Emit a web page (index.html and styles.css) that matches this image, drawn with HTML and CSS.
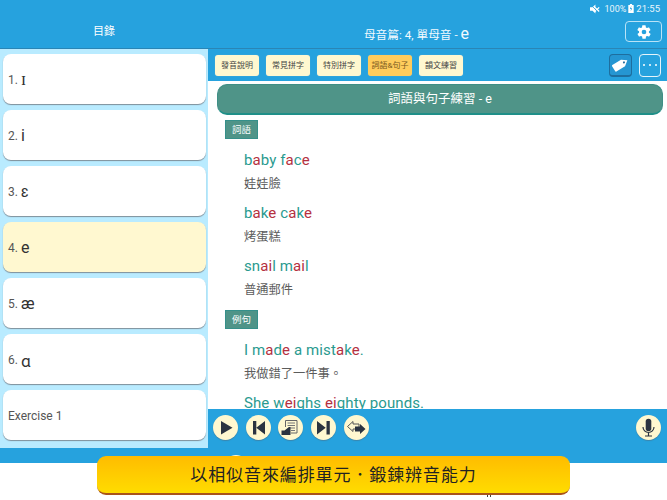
FILE: index.html
```html
<!DOCTYPE html>
<html lang="zh-Hant">
<head>
<meta charset="utf-8">
<title>母音篇</title>
<link rel="stylesheet" href="styles.css">
</head>
<body>
<div class="app">
  <header class="header">
    <div class="header-side"><span class="header-list-title">目錄</span></div>
    <div class="header-main">
      <div class="status">
        <svg class="mute" viewBox="0 0 12 12" width="10" height="10"><path d="M0 4h3l3.500-3.500v11L3 8H0z" fill="#fff"/><path d="M6 4l5 5M11 4L6 9" stroke="#fff" stroke-width="1.500"/><path d="M0 0l11 11" stroke="#26a2de" stroke-width="1"/></svg>
        <span class="pct">100%</span>
        <svg viewBox="0 0 6 10" width="6" height="9"><path d="M0 1h1.800V0h2.400v1H6v9H0z" fill="#fff"/><path d="M3.400 2L1.800 5.600h1.200L2.600 8.400l1.700-3.600H3z" fill="#26a2de"/></svg>
        <span>21:55</span>
      </div>
      <div class="title-row">
        <div class="title">母音篇: 4, 單母音 - <span class="title-ipa">e</span></div>
        <button class="gear-btn">
          <svg viewBox="0 0 24 24" width="16" height="16"><path fill="#fff" d="M19.400 13a7.500 7.500 0 0 0 0-2l2.100-1.600a.5.5 0 0 0 .1-.6l-2-3.500a.5.5 0 0 0-.6-.2l-2.500 1a7.300 7.300 0 0 0-1.700-1l-.4-2.700a.5.5 0 0 0-.5-.4h-4a.5.5 0 0 0-.5.4l-.4 2.700a7.300 7.300 0 0 0-1.700 1l-2.500-1a.5.5 0 0 0-.6.2l-2 3.500a.5.5 0 0 0 .1.600L4.600 11a7.500 7.500 0 0 0 0 2l-2.100 1.600a.5.5 0 0 0-.1.600l2 3.500c.1.200.4.300.6.200l2.500-1a7.300 7.300 0 0 0 1.700 1l.4 2.700c0 .2.200.4.500.4h4c.3 0 .5-.2.500-.4l.4-2.700a7.300 7.300 0 0 0 1.700-1l2.500 1c.2.100.5 0 .6-.2l2-3.500a.5.500 0 0 0-.1-.6zM12 15.500a3.500 3.500 0 1 1 0-7 3.500 3.500 0 0 1 0 7z"/></svg>
        </button>
      </div>
    </div>
  </header>
  <div class="body">
    <aside class="sidebar">
      <div class="item"><span class="num">1.</span> <span class="ipa ipa-serif">ɪ</span></div>
      <div class="item"><span class="num">2.</span> <span class="ipa">i</span></div>
      <div class="item"><span class="num">3.</span> <span class="ipa">ɛ</span></div>
      <div class="item item-active"><span class="num">4.</span> <span class="ipa">e</span></div>
      <div class="item"><span class="num">5.</span> <span class="ipa">æ</span></div>
      <div class="item"><span class="num">6.</span> <span class="ipa">ɑ</span></div>
      <div class="item"><span class="num">Exercise 1</span></div>
    </aside>
    <main class="pane">
      <nav class="toolbar">
        <button class="tab">發音說明</button>
        <button class="tab">常見拼字</button>
        <button class="tab">特別拼字</button>
        <button class="tab tab-active">詞語&amp;句子</button>
        <button class="tab">韻文練習</button>
        <button class="tag-btn">
          <svg viewBox="0 0 20 20" width="17" height="17"><g transform="rotate(-32 10 10)"><path fill="#fff" d="M1.500 5.500h12L19.500 10l-6 4.500h-12a1 1 0 0 1-1-1v-7a1 1 0 0 1 1-1z"/><circle cx="14.800" cy="10" r="1.200" fill="#2a6f9f"/></g></svg>
        </button>
        <button class="more-btn"><i></i><i></i><i></i></button>
      </nav>
      <div class="scroll">
        <h2 class="heading">詞語與句子練習 - e</h2>
        <div class="label">詞語</div>
        <div class="entry">
          <div class="en"><span class="t">b</span><span class="r">a</span><span class="t">by f</span><span class="r">a</span><span class="t">c</span><span class="r">e</span></div>
          <div class="zh">娃娃臉</div>
        </div>
        <div class="entry">
          <div class="en"><span class="t">b</span><span class="r">a</span><span class="t">k</span><span class="r">e</span> <span class="t">c</span><span class="r">a</span><span class="t">k</span><span class="r">e</span></div>
          <div class="zh">烤蛋糕</div>
        </div>
        <div class="entry">
          <div class="en"><span class="t">sn</span><span class="r">ai</span><span class="t">l m</span><span class="r">ai</span><span class="t">l</span></div>
          <div class="zh">普通郵件</div>
        </div>
        <div class="label label-second">例句</div>
        <div class="entry">
          <div class="en"><span class="t">I m</span><span class="r">a</span><span class="t">d</span><span class="r">e</span> <span class="t">a mist</span><span class="r">a</span><span class="t">k</span><span class="r">e</span><span class="t">.</span></div>
          <div class="zh">我做錯了一件事。</div>
        </div>
        <div class="entry">
          <div class="en"><span class="t">She w</span><span class="r">ei</span><span class="t">ghs </span><span class="r">ei</span><span class="t">ghty pounds.</span></div>
        </div>
      </div>
      <div class="player">
        <button class="round">
          <svg viewBox="0 0 25 25"><path d="M8 6l11.500 6.700L8 19.500z" fill="#2b3340"/></svg>
        </button>
        <button class="round">
          <svg viewBox="0 0 25 25"><path d="M7 6h3.300v13.500H7zM19 6v13.500l-8.700-6.700z" fill="#2b3340"/></svg>
        </button>
        <button class="round">
          <svg viewBox="0 0 25 25"><path d="M7.500 12V5.500h11.500v12.500H13" fill="#fff8d0" stroke="#666" stroke-width="1"/><path d="M9.500 8h7.500M9.500 10.500h7.500M10.500 13h6.500M13 15.500h4" stroke="#777" stroke-width="1"/><path d="M3.500 15.500h3l4.500-3.500h1.500v8H3.500z" fill="#2b3340"/></svg>
        </button>
        <button class="round">
          <svg viewBox="0 0 25 25"><path d="M6 6v13.500l8.700-6.700zM15.500 6h3.300v13.500h-3.300z" fill="#2b3340"/></svg>
        </button>
        <button class="round">
          <svg viewBox="0 0 25 25"><path d="M9 6.500L3.500 11.500 9 16.500v-2.500h6V9H9z" fill="#fff8d0" stroke="#555" stroke-width="1"/><path d="M11 11.500h5V9l5.500 5-5.500 5v-2.500h-5z" fill="#2b3340"/></svg>
        </button>
        <button class="round round-end">
          <svg viewBox="0 0 25 25"><rect x="9.700" y="3.800" width="5.600" height="12.500" rx="2.800" fill="#2b3340"/><path d="M7 12a5.500 5.500 0 0 0 11 0M12.500 17.500v3M9 21h7" fill="none" stroke="#2b3340" stroke-width="1.200"/></svg>
        </button>
      </div>
    </main>
  </div>
  <div class="peek"></div>
  <div class="ticks"><i></i><i></i></div>
  <div class="banner">以相似音來編排單元．鍛鍊辨音能力</div>
</div>
</body>
</html>
```

FILE: styles.css
```css
* { box-sizing: border-box; }
html, body { margin: 0; padding: 0; background: #fff; }
body {
  width: 667px;
  height: 500px;
  overflow: hidden;
  font-family: Roboto, "Noto Sans CJK TC", sans-serif;
}
button { font-family: inherit; padding: 0; border: 0; }
.app { position: relative; width: 667px; height: 500px; }

.header {
  display: flex;
  height: 49px;
  background: #26a2de;
  border-bottom: 1px solid #2a85b5;
}
.header-side {
  width: 208px;
  display: flex;
  justify-content: center;
  padding-top: 25px;
}
.header-list-title { font-size: 11px; line-height: 14px; color: #fff; }
.header-main { flex: 1; display: flex; flex-direction: column; }
.status {
  height: 17px;
  display: flex;
  justify-content: flex-end;
  align-items: center;
  gap: 2px;
  padding-right: 7px;
  font-size: 9.500px;
  color: #e9f6fc;
}
.mute { margin-right: 3px; }
.pct { font-size: 9px; }
.title-row { position: relative; display: flex; justify-content: center; padding: 7px 42px 0 0; }
.title { font-size: 11.700px; line-height: 20px; color: #f2fafe; }
.title-ipa { font-size: 16px; }
.gear-btn {
  position: absolute;
  right: 5px;
  top: 4px;
  width: 37px;
  height: 21px;
  display: flex;
  align-items: center;
  justify-content: center;
  background: transparent;
  border: 1px solid #b9e3f7;
  border-radius: 4px;
}

.body { display: flex; height: 414px; background: #26a2de; }
.sidebar {
  width: 208px;
  flex: none;
  height: 399px;
  background: #b9ebff;
  padding: 5px 2px 0 3px;
  display: flex;
  flex-direction: column;
  gap: 6px;
}
.item {
  height: 50px;
  flex: none;
  display: flex;
  align-items: center;
  gap: 3px;
  padding: 1px 0 0 5px;
  background: #fff;
  border-radius: 8px;
  box-shadow: 0 1px 1px #7f8f9a;
  color: #555;
}
.item-active { background: #fff8d0; }
.num { font-size: 12px; }
.ipa { font-size: 16px; color: #333; }
.ipa-serif { font-family: "Liberation Serif", serif; font-size: 18px; }

.pane { flex: 1; display: flex; flex-direction: column; min-width: 0; }
.toolbar {
  height: 32px;
  flex: none;
  display: flex;
  align-items: center;
  gap: 7px;
  padding: 0 6px 0 7px;
  background: #26a2de;
  position: relative;
}
.tab {
  width: 44px;
  height: 21px;
  background: #fff8d0;
  border-radius: 3px;
  color: #444;
  font-size: 8px;
  line-height: 21px;
  text-align: center;
  box-shadow: 0 0 1px #7fb9d8;
}
.tab-active { background: #ffcc5c; color: #7a5a20; }
.tag-btn {
  margin-left: auto;
  width: 23px;
  height: 23px;
  display: flex;
  align-items: center;
  justify-content: center;
  background: #2596d2;
  border: 1px solid #1e6e9e;
  border-bottom-width: 2px;
  border-radius: 4px;
}
.more-btn {
  width: 22px;
  height: 23px;
  display: flex;
  align-items: center;
  justify-content: center;
  gap: 4px;
  background: transparent;
  border: 1px solid #e4f4fb;
  border-radius: 4px;
}
.more-btn i { width: 2px; height: 2px; background: #fff; border-radius: 50%; }

.scroll {
  flex: 1;
  min-height: 0;
  overflow: hidden;
  background: #fff;
  padding: 3px 4px 0 9px;
}
.heading {
  margin: 0;
  height: 31px;
  background: #4f9488;
  border: 1px solid #3f8f86;
  border-bottom: 2px solid #1f8f88;
  border-radius: 10px;
  color: #fff;
  font-size: 12.500px;
  font-weight: 400;
  line-height: 28px;
  text-align: center;
}
.label {
  width: 33px;
  height: 19px;
  margin: 5px 0 0 8px;
  background: #4f9488;
  border: 1px solid #35908a;
  color: #fff;
  font-size: 9.500px;
  line-height: 17px;
  text-align: center;
}
.label-second { margin-top: 11px; }
.entry { margin: 0 0 0 27px; padding-top: 10px; }
.label + .entry { padding-top: 11px; }
.en { font-size: 15px; line-height: 20px; letter-spacing: 0.100px; }
.en .t { color: #2a9a8f; }
.en .r { color: #b5303f; }
.zh { margin-top: 6px; font-size: 12.250px; line-height: 17px; color: #5c5c5c; }

.player {
  height: 54px;
  flex: none;
  display: flex;
  gap: 7.700px;
  padding: 6px 6px 0 5px;
  background: #26a2de;
}
.round {
  width: 25px;
  height: 25px;
  flex: none;
  border-radius: 50%;
  background: #fff8d0;
  display: flex;
  align-items: center;
  justify-content: center;
  overflow: hidden;
  box-shadow: 0 1px 1px #3b86ad;
}
.round svg { width: 25px; height: 25px; }
.round-end { margin-left: auto; }

.peek {
  position: absolute;
  left: 225px;
  top: 455px;
  width: 22px;
  height: 22px;
  border-radius: 50%;
  background: #fff8d0;
}
.ticks {
  position: absolute;
  left: 487px;
  top: 495px;
  display: flex;
  gap: 2px;
}
.ticks i { width: 1px; height: 2px; background: #444; }
.banner {
  position: absolute;
  left: 97px;
  top: 456px;
  width: 473px;
  height: 39px;
  border-radius: 9px;
  border-bottom: 2px solid #a9541a;
  background: linear-gradient(#ffbc00, #ffdc00);
  color: #222;
  font-size: 17px;
  letter-spacing: 0.900px;
  line-height: 38px;
  text-align: center;
}
```
